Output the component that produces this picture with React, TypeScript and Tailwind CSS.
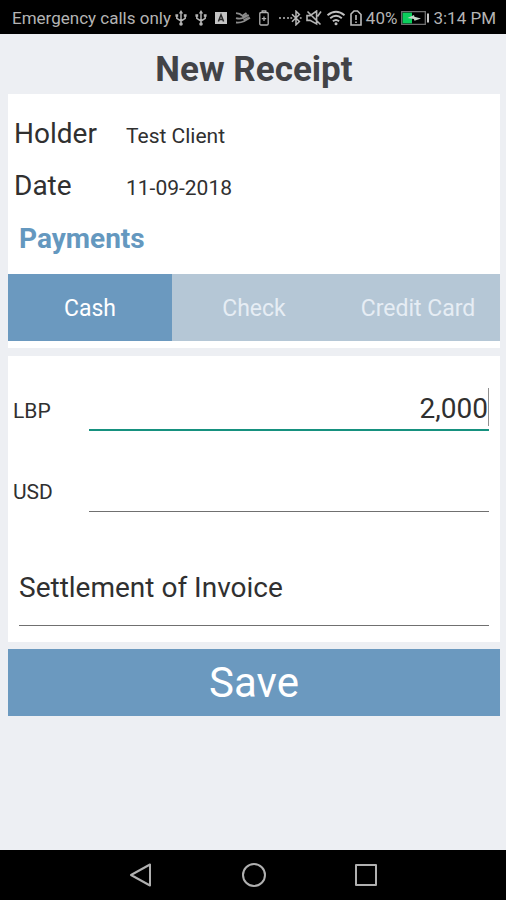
import { useState } from "react";

function UsbIcon() {
  return (
    <svg className="h-4 w-3 shrink-0" viewBox="0 0 12 16" fill="none" stroke="#b4b4b4" strokeWidth="1.5">
      <path d="M6 3v10M1.800 6v2.400L6 11M10.200 6v2.400L6 11" />
      <path d="M6 0 3.800 3.400h4.400zM.4 4.200h2.800v2.600H.4zM8.800 4.200h2.800v2.600H8.800z" fill="#b4b4b4" stroke="none" />
      <circle cx="6" cy="14" r="1.800" fill="#b4b4b4" stroke="none" />
    </svg>
  );
}

function LetterBoxIcon() {
  return (
    <svg className="h-3 w-3 shrink-0" viewBox="0 0 12 12" fill="none">
      <path d="M0 0h12v12H0z" fill="#c4c4c4" />
      <path d="M3.4 9.4 6 2.8l2.6 6.6M4.2 7.4h3.6" stroke="#2a2a2a" strokeWidth="1.5" />
    </svg>
  );
}

function SwooshIcon() {
  return (
    <svg className="h-3 w-4 shrink-0" viewBox="0 0 16 12" fill="none" stroke="#8c8c8c" strokeWidth="1.800">
      <path d="M1 1.200q4 .2 6.500 2.600L11.500 1M1 6.200q4 1.200 7.500-.4L13.800 3M1 10.500q4.500.4 8-1.200l6-3.500" />
      <path d="M7 4.500 12 2l2.500 3L9 9z" fill="#8c8c8c" stroke="none" />
      <path d="m8.500 7 5.500-2.800" stroke="#222" strokeWidth=".6" />
    </svg>
  );
}

function UprightBatteryIcon() {
  return (
    <svg className="h-4 w-2.5 shrink-0" viewBox="0 0 10 16" fill="none" stroke="#b0b0b0" strokeWidth="1.3">
      <path d="M3.200 2.400V.8h3.600v1.600M2 2.500h6q1.200 0 1.200 1.200v10q0 1.300-1.200 1.300H2Q.8 15 .8 13.700v-10Q.8 2.500 2 2.500z" />
      <path d="M5 6.500v4.500M2.800 8.700h4.400" />
    </svg>
  );
}

function BluetoothIcon() {
  return (
    <svg className="h-4 w-6 shrink-0" viewBox="0 0 24 16" fill="none" stroke="#b8b8b8" strokeWidth="1.5">
      <path d="M1 7.200h2v1.600H1zM5 7.200h2v1.600H5zM9 7.200h2v1.600H9zM12.400 7.200h1.800v1.600h-1.800zM21.800 7.200h1.800v1.600h-1.800z" fill="#b8b8b8" stroke="none" />
      <path d="m14 4.200 7.400 7.300L18 14.800V1.200l3.400 3.300L14 11.800" />
    </svg>
  );
}

function MutedIcon() {
  return (
    <svg className="h-4 w-4 shrink-0" viewBox="0 0 16 16" fill="none" stroke="#b4b4b4" strokeWidth="1.600">
      <path d="M1 5.600h3L10.600 1v13L4 10.400H1zM1.500 1.500l13 13M11.500 6.500 15 1.500" />
    </svg>
  );
}

function WifiIcon() {
  return (
    <svg className="h-4 w-5 shrink-0" viewBox="0 0 20 16" fill="none" stroke="#c0c0c0" strokeWidth="1.900">
      <path d="M1.500 5.200q8.500-7 17 0M4.200 8.300q5.800-5 11.600 0M6.900 11.300q3.100-2.800 6.200 0" />
      <circle cx="10" cy="13.800" r="1.500" fill="#c0c0c0" stroke="none" />
    </svg>
  );
}

function SimAlertIcon() {
  return (
    <svg className="h-4 w-3 shrink-0" viewBox="0 0 12 16" fill="none" stroke="#bcbcbc" strokeWidth="1.600">
      <path d="M4 1h3.500L11 4.500V15H1V4zM6 5v5M6 11.500V13" />
    </svg>
  );
}

function ChargingIcon() {
  return (
    <svg className="h-3.5 w-7 shrink-0" viewBox="0 0 28 14" fill="none">
      <path d="M.7.700h23.600v12.600H.7z" stroke="#707070" strokeWidth="1.300" />
      <path d="M1.600 1.600H11v10.800H1.600z" fill="#0bd05c" />
      <path d="M26 2.500h2v9h-2z" fill="#c8c8c8" />
      <path d="m6.500 7 6.500-3 .4 1.800 6.600 1.600-6.500 2.400-.6-1.800z" fill="#c4d6c8" />
    </svg>
  );
}

function StatusBar() {
  return (
    <header className="flex h-[34px] items-center justify-between bg-black pr-2.5 pl-3 pt-0.5 text-[17px] leading-5 text-[#b4b4b4]">
      <div className="flex items-center gap-2">
        <div className="flex items-center gap-1">
          <span className="whitespace-nowrap">Emergency calls only</span>
          <UsbIcon />
        </div>
        <UsbIcon />
        <LetterBoxIcon />
        <SwooshIcon />
        <UprightBatteryIcon />
      </div>
      <div className="flex items-center gap-1">
        <BluetoothIcon />
        <MutedIcon />
        <WifiIcon />
        <SimAlertIcon />
        <span>40%</span>
        <ChargingIcon />
        <span className="whitespace-nowrap">3:14 PM</span>
      </div>
    </header>
  );
}

const methods = ["Cash", "Check", "Credit Card"];

export default function App() {
  const [method, setMethod] = useState("Cash");
  const [lbp, setLbp] = useState("2,000");
  const [usd, setUsd] = useState("");
  const [note, setNote] = useState("Settlement of Invoice");

  return (
    <div className="flex min-h-screen flex-col bg-[#edeff3] font-['Roboto',sans-serif] text-[#303030]">
      <StatusBar />

      <main className="flex flex-1 flex-col pr-1.5 pl-2">
        <h1 className="pt-3 text-center text-[35px] leading-[48px] font-bold text-[#424347]">New Receipt</h1>

        <section className="bg-white pt-3.5 pb-[7px]">
          <dl className="px-1.5">
            <div className="flex h-[52px] items-baseline">
              <dt className="w-28 text-[28px] leading-[52px]">Holder</dt>
              <dd className="text-[21px]">Test Client</dd>
            </div>
            <div className="flex h-[52px] items-baseline">
              <dt className="w-28 text-[28px] leading-[52px]">Date</dt>
              <dd className="text-[21px]">11-09-2018</dd>
            </div>
          </dl>
          <h2 className="px-[11px] pb-2 text-[28px] leading-[54px] font-bold text-[#6498bf]">Payments</h2>
          <div className="grid grid-cols-3 bg-[#b5c7d6]" role="tablist" aria-label="Payment method">
            {methods.map((name) => (
              <button
                key={name}
                type="button"
                role="tab"
                aria-selected={method === name}
                onClick={() => setMethod(name)}
                className={
                  method === name
                    ? "h-[67px] bg-[#6b99bf] pt-1 text-[23px] text-white"
                    : "h-[67px] pt-1 text-[23px] text-[#e6edf4]"
                }
              >
                {name}
              </button>
            ))}
          </div>
        </section>

        <section className="mt-2 bg-white pt-6 pr-[11px] pb-4">
          <div className="flex items-center pl-[5px]">
            <label htmlFor="lbp" className="w-[76px] pt-3 text-[21px]">LBP</label>
            <div className="flex h-[51px] min-w-0 flex-1 items-center border-b-2 border-[#16917f] pt-1">
              <input
                id="lbp"
                value={lbp}
                onChange={(e) => setLbp(e.target.value)}
                className="min-w-0 flex-1 pt-1 text-right text-[28px] leading-9 outline-none"
              />
              <span className="h-[38px] w-px bg-[#909090]" />
            </div>
          </div>
          <div className="flex items-center pt-7 pl-[5px]">
            <label htmlFor="usd" className="w-[76px] pt-3.5 text-[21px]">USD</label>
            <input
              id="usd"
              value={usd}
              onChange={(e) => setUsd(e.target.value)}
              className="h-[53px] min-w-0 flex-1 border-b border-[#707070] text-right text-[28px] outline-none"
            />
          </div>
          <div className="flex pt-[50px] pl-[11px]">
            <input
              aria-label="Description"
              value={note}
              onChange={(e) => setNote(e.target.value)}
              className="h-16 min-w-0 flex-1 border-b border-[#707070] pb-3 text-[28px] outline-none"
            />
          </div>
        </section>

        <button type="button" className="mt-[7px] h-[67px] bg-[#6b99bf] text-[42px] leading-[67px] text-white">
          Save
        </button>
      </main>

      <nav className="flex h-[50px] items-center justify-center gap-[88px] bg-black pl-0.5" aria-label="System">
        <button type="button" aria-label="Back">
          <svg className="h-6 w-6" viewBox="0 0 24 24" fill="none" stroke="#b0b0b0" strokeWidth="2" strokeLinejoin="round">
            <path d="M20 1.500v21L1 12z" />
          </svg>
        </button>
        <button type="button" aria-label="Home">
          <svg className="h-6 w-6" viewBox="0 0 24 24" fill="none" stroke="#b0b0b0" strokeWidth="2">
            <circle cx="12" cy="12" r="11" />
          </svg>
        </button>
        <button type="button" aria-label="Recent apps">
          <svg className="h-6 w-6" viewBox="0 0 24 24" fill="none" stroke="#b0b0b0" strokeWidth="2" strokeLinejoin="round">
            <path d="M2 2h20v20H2z" />
          </svg>
        </button>
      </nav>
    </div>
  );
}
